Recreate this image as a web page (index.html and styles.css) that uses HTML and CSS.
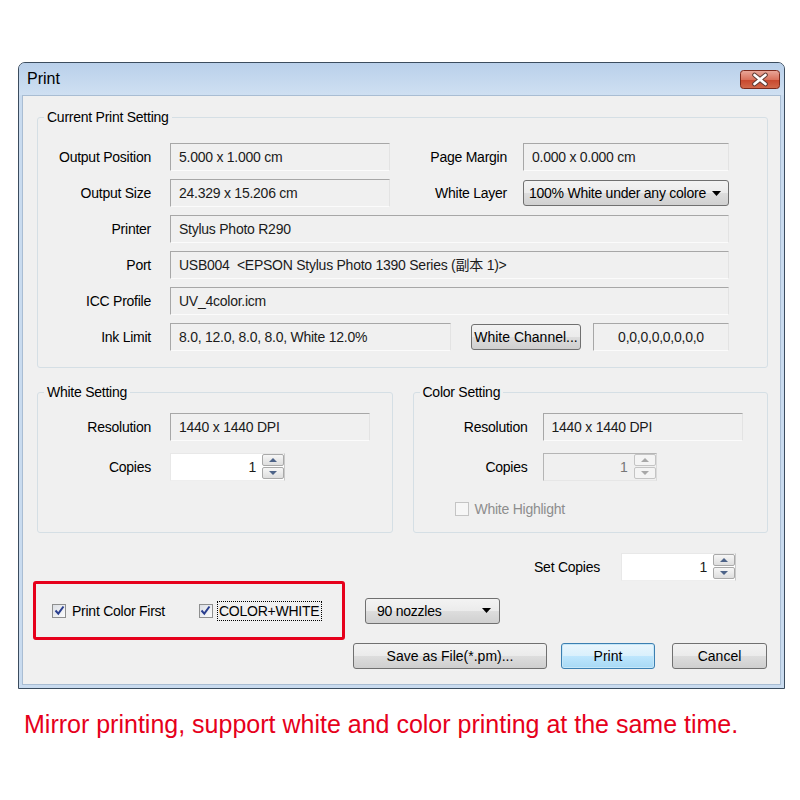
FILE: index.html
```html
<!DOCTYPE html>
<html lang="en">
<head>
  <meta charset="UTF-8" />
  <title>Print</title>
  <link rel="stylesheet" href="styles.css">
</head>
<body>
<div class="window">
  <div class="titlebar">
    <span class="title">Print</span>
    <svg class="close" width="40" height="19" viewBox="0 0 40 19">
      <defs>
        <linearGradient id="closeBg" x1="0" y1="0" x2="0" y2="1">
          <stop offset="0" stop-color="#e9a99b"/>
          <stop offset="0.5" stop-color="#d9735d"/>
          <stop offset="0.51" stop-color="#c8462d"/>
          <stop offset="1" stop-color="#d26a4c"/>
        </linearGradient>
      </defs>
      <rect x="0.5" y="0.5" width="39" height="18" rx="3" fill="url(#closeBg)" stroke="#7b2a1c"/>
      <path d="M14.5 5 L25.5 14 M25.5 5 L14.5 14" stroke="#5d3a33" stroke-width="4.6" stroke-linecap="round"/>
      <path d="M14.5 5 L25.5 14 M25.5 5 L14.5 14" stroke="#fff" stroke-width="2.6" stroke-linecap="round"/>
    </svg>
  </div>

  <div class="client">
    <fieldset class="group">
      <legend>Current Print Setting</legend>
      <div class="rows">
        <div class="row">
          <span class="label">Output Position</span>
          <div class="field w220">5.000 x 1.000 cm</div>
          <span class="label label-2">Page Margin</span>
          <div class="field grow">0.000 x 0.000 cm</div>
        </div>
        <div class="row">
          <span class="label">Output Size</span>
          <div class="field w220">24.329 x 15.206 cm</div>
          <span class="label label-2">White Layer</span>
          <div class="combo grow">
            <span class="combo-text">100% White under any colore</span>
            <svg class="arrow" width="9" height="5" viewBox="0 0 9 5"><path d="M0 0 H9 L4.5 5 Z" fill="#000"/></svg>
          </div>
        </div>
        <div class="row">
          <span class="label">Printer</span>
          <div class="field grow">Stylus Photo R290</div>
        </div>
        <div class="row">
          <span class="label">Port</span>
          <div class="field grow">USB004  &lt;EPSON Stylus Photo 1390 Series (副本 1)&gt;</div>
        </div>
        <div class="row">
          <span class="label">ICC Profile</span>
          <div class="field grow">UV_4color.icm</div>
        </div>
        <div class="row">
          <span class="label">Ink Limit</span>
          <div class="field w281">8.0, 12.0, 8.0, 8.0, White 12.0%</div>
          <button class="btn btn-channel">White Channel...</button>
          <div class="field grow centered">0,0,0,0,0,0,0,0</div>
        </div>
      </div>
    </fieldset>

    <div class="groups">
      <fieldset class="group">
        <legend>White Setting</legend>
        <div class="rows small">
          <div class="row">
            <span class="label">Resolution</span>
            <div class="field w200">1440 x 1440 DPI</div>
          </div>
          <div class="row">
            <span class="label">Copies</span>
            <div class="spin">
              <span class="spin-value">1</span>
              <span class="spin-buttons">
                <span class="spin-btn"><i class="up"></i></span>
                <span class="spin-btn"><i class="down"></i></span>
              </span>
            </div>
          </div>
        </div>
      </fieldset>

      <fieldset class="group group-color">
        <legend>Color Setting</legend>
        <div class="rows small">
          <div class="row">
            <span class="label">Resolution</span>
            <div class="field w200">1440 x 1440 DPI</div>
          </div>
          <div class="row">
            <span class="label">Copies</span>
            <div class="spin disabled">
              <span class="spin-value">1</span>
              <span class="spin-buttons">
                <span class="spin-btn"><i class="up"></i></span>
                <span class="spin-btn"><i class="down"></i></span>
              </span>
            </div>
          </div>
        </div>
        <label class="check check-highlight disabled">
          <span class="box"></span>
          <span>White Highlight</span>
        </label>
      </fieldset>
    </div>

    <div class="copies-row">
      <span>Set Copies</span>
      <div class="spin">
        <span class="spin-value">1</span>
        <span class="spin-buttons">
          <span class="spin-btn"><i class="up"></i></span>
          <span class="spin-btn"><i class="down"></i></span>
        </span>
      </div>
    </div>

    <div class="options-row">
      <div class="marked">
        <label class="check">
          <span class="box checked">
            <svg width="11" height="11" viewBox="0 0 11 11"><path d="M1.5 5.5 L4.3 8.6 L9.5 1.5" fill="none" stroke="#2a3f8f" stroke-width="2"/></svg>
          </span>
          <span>Print Color First</span>
        </label>
        <label class="check">
          <span class="box checked">
            <svg width="11" height="11" viewBox="0 0 11 11"><path d="M1.5 5.5 L4.3 8.6 L9.5 1.5" fill="none" stroke="#2a3f8f" stroke-width="2"/></svg>
          </span>
          <span class="focused">COLOR+WHITE</span>
        </label>
      </div>
      <div class="combo nozzles">
        <span class="combo-text">90 nozzles</span>
        <svg class="arrow" width="9" height="5" viewBox="0 0 9 5"><path d="M0 0 H9 L4.5 5 Z" fill="#000"/></svg>
      </div>
    </div>

    <div class="buttons">
      <button class="btn btn-save">Save as File(*.pm)...</button>
      <button class="btn btn-print">Print</button>
      <button class="btn btn-cancel">Cancel</button>
    </div>
  </div>
</div>

<p class="caption">Mirror printing, support white and color printing at the same time.</p>
</body>
</html>
```

FILE: styles.css
```css
* { box-sizing: border-box; }
html, body { margin:0; padding:0; background:#fff; }
body { font-family:"Liberation Sans", Arial, "Noto Sans CJK SC", sans-serif; font-size:14px; color:#000; }

/* window frame */
.window {
  width:767px; margin:62px 0 0 18px;
  border:1px solid #3b4c5e; border-radius:7px 7px 0 0;
  background:#c9dbef;
}
.titlebar {
  height:32px; display:flex; justify-content:space-between; align-items:flex-start;
  padding:0 4px 0 8px; border-radius:6px 6px 0 0;
  background:linear-gradient(#b9d0ea, #cfe0f2);
}
.title { font-size:16px; line-height:32px; }
.close { margin-top:7px; display:block; }

.client {
  margin:0 3px 3px; padding:13px 12px 15px 14px;
  background:#f0f0f0; border:1px solid #a9bdd3;
  letter-spacing:-0.25px;
}

/* group boxes */
.group {
  margin:0; min-width:0;
  border:1px solid #d5dfe5; border-radius:3px;
  padding:18px 38px 16px 0;
}
.group legend { margin-left:6px; padding:0 3px; line-height:16px; }
.groups { display:grid; grid-template-columns:1fr 1fr; gap:20px; margin-top:16px; }
.groups .group { padding:13px 20px 15px 0; }

.rows { display:flex; flex-direction:column; gap:8px; }
.rows.small { gap:12px; }
.row { display:flex; align-items:center; height:28px; }
.label { flex:none; width:113px; margin-right:19px; text-align:right; }
.label-2 { width:117px; margin-right:16px; }
.group-color .label { width:114px; margin-right:15px; }

.field {
  flex:none; height:28px; line-height:26px; padding:0 8px;
  background:#f0f0f0; color:#1b1b1b;
  border:1px solid; border-color:#a7a7a7 #e3e3e3 #fbfbfb #a7a7a7;
  white-space:pre; overflow:hidden;
}
.field.grow, .combo.grow { flex:1; }
.field.centered { text-align:center; }
.w220 { width:220px; }
.w281 { width:281px; }
.w200 { width:200px; }

/* drop-down lists */
.combo {
  display:flex; align-items:center; justify-content:space-between;
  height:26px; padding:0 8px 0 5px; overflow:hidden;
  border:1px solid #707070; border-radius:3px;
  background:linear-gradient(#f3f3f3 0%, #ebebeb 50%, #dddddd 51%, #d0d0d0 100%);
}
.combo-text { white-space:nowrap; }
.arrow { flex:none; margin-left:6px; }
.nozzles { width:135px; margin-left:20px; padding-left:11px; padding-right:8px; }

/* buttons */
.btn {
  height:26px; padding:0; font:inherit; color:#000;
  border:1px solid #707070; border-radius:3px;
  background:linear-gradient(#f2f2f2 0%, #ebebeb 50%, #dddddd 51%, #cfcfcf 100%);
}
.btn-channel { width:110px; margin:0 12px 0 20px; flex:none; }
.buttons { display:flex; justify-content:flex-end; gap:14px; margin-top:3px; padding-right:1px; }
.btn-save { width:194px; }
.btn-print {
  width:94px; margin-right:3px;
  border-color:#3c7fb1;
  background:linear-gradient(#eaf6fd 0%, #d9f0fc 50%, #bee6fd 51%, #a7d9f5 100%);
  box-shadow:inset 0 0 0 1px #c6e7f8;
}
.btn-cancel { width:95px; }

/* spin boxes */
.spin {
  flex:none; display:flex; width:115px; height:28px;
  background:#fff; border:1px solid; border-color:#e8e8e8 #c9c9c9 #eeeeee #e8e8e8;
}
.spin-value { flex:1; text-align:right; line-height:26px; padding-right:6px; color:#1b1b1b; }
.spin-buttons { width:22px; display:flex; flex-direction:column; gap:1px; padding:0 0 1px; }
.spin-btn {
  flex:1; display:flex; align-items:center; justify-content:center;
  border:1px solid #a9a9a9; border-radius:2px;
  background:linear-gradient(#f6f6f6, #dedede);
}
.spin-btn i { width:0; height:0; border-left:4px solid transparent; border-right:4px solid transparent; }
.spin-btn .up { border-bottom:4px solid #4d6388; }
.spin-btn .down { border-top:4px solid #4d6388; }
.spin.disabled { width:114px; background:#f0f0f0; border-color:#b5b5b5 #dadada #e6e6e6 #b5b5b5; }
.spin.disabled .spin-value { color:#777; }
.spin.disabled .spin-btn { border-color:#c4c4c4; background:#f4f4f4; }
.spin.disabled .up { border-bottom-color:#a8a8a8; }
.spin.disabled .down { border-top-color:#a8a8a8; }

/* check boxes */
.check { display:flex; align-items:center; gap:6px; line-height:16px; }
.check .box {
  width:14px; height:14px; flex:none;
  display:flex; align-items:center; justify-content:center;
  border:1px solid #8e8f8f;
  background:linear-gradient(135deg, #dcdfe5, #fbfcfd);
}
.check.disabled { color:#8d8d8d; }
.check.disabled .box { border-color:#c4c4c4; background:#f6f6f6; }
.check-highlight { margin:20px 0 0 41px; }

.copies-row { display:flex; justify-content:flex-end; align-items:center; gap:21px; margin-top:20px; padding-right:32px; }

.options-row { display:flex; align-items:center; }
.marked {
  display:flex; align-items:center; gap:34px;
  width:312px; height:59px; margin-left:-4px; padding-left:16px;
  border:3px solid #e6001b; border-radius:3px;
}
.focused { outline:1px dotted #000; outline-offset:1px; padding:0 1px 0 0; }

.caption { margin:20px 0 0; padding-left:24px; font-size:25px; line-height:30px; color:#e6001b; }
```
